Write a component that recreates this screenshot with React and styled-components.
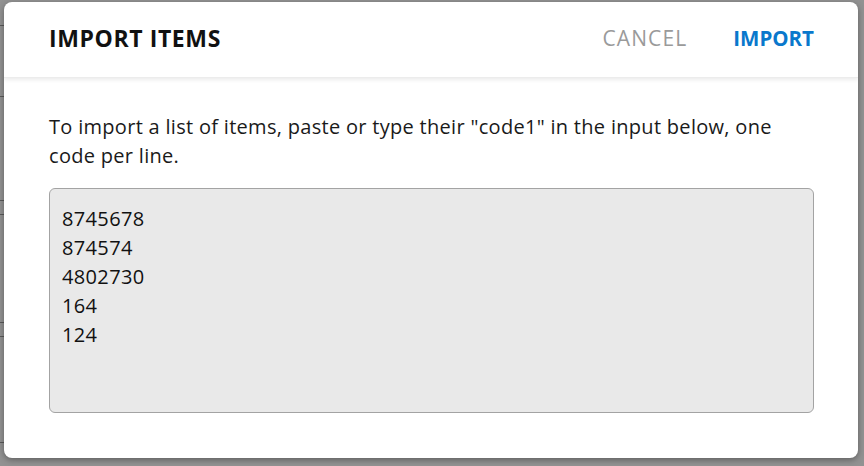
import React from "react";
import styled, { createGlobalStyle } from "styled-components";

const Global = createGlobalStyle`
  html, body { margin: 0; padding: 0; }
  body {
    width: 864px; height: 466px; overflow: hidden;
    background: #929292;
    font-family: "Open Sans", "Noto Sans", sans-serif;
  }
`;

const Backdrop = styled.div`
  position: relative;
  width: 864px;
  height: 466px;
  padding: 2px 6px 8px 4px;
  box-sizing: border-box;
  background: #929292;
`;

const BgLine = styled.div`
  position: absolute;
  left: 0;
  width: 4px;
  height: 1px;
  background: #5a5a5a;
`;

const Dialog = styled.div`
  position: relative;
  height: 456px;
  background: #fff;
  border-radius: 8px;
  box-shadow: 0 2px 6px rgba(0,0,0,0.35);
  display: flex;
  flex-direction: column;
  overflow: hidden;
`;

const Header = styled.div`
  height: 75px;
  flex: none;
  display: flex;
  align-items: center;
  justify-content: space-between;
  padding: 0 44px 0 45px;
  box-shadow: 0 2px 4px rgba(0,0,0,0.08);
  border-bottom: 1px solid #ececec;
  position: relative;
  z-index: 1;
`;

const Title = styled.h1`
  margin: -3px 0 0;
  font-size: 23px;
  font-weight: 700;
  letter-spacing: 0.6px;
  color: #111;
`;

const Actions = styled.div`
  display: flex;
  align-items: center;
  gap: 46px;
  margin-top: -3px;
`;

const ActionButton = styled.button`
  border: none;
  background: none;
  padding: 0;
  font-family: inherit;
  font-size: ${p => (p.$primary ? "20.5px" : "21px")};
  letter-spacing: ${p => (p.$primary ? "0" : "1.1px")};
  font-weight: ${p => (p.$primary ? 700 : 400)};
  color: ${p => (p.$primary ? "#0a78cc" : "#9a9a9a")};
  cursor: pointer;
`;

const Body = styled.div`
  flex: 1;
  padding: 34px 44px 45px 45px;
  display: flex;
  flex-direction: column;
`;

const Intro = styled.p`
  margin: 0 0 18px;
  max-width: 745px;
  font-size: 20px;
  letter-spacing: 0.3px;
  line-height: 29px;
  color: #1a1a1a;
`;

const CodeArea = styled.textarea`
  flex: 1;
  resize: none;
  background: #e9e9e9;
  border: 1px solid #a3a3a3;
  border-radius: 6px;
  padding: 15px 12px 12px;
  font-family: inherit;
  font-size: 20px;
  letter-spacing: 0.35px;
  line-height: 29px;
  color: #111;
  outline: none;
  caret-color: #111;
`;

export default function App() {
  const ref = React.useRef(null);
  React.useEffect(() => {
    const el = ref.current;
    if (el) {
      el.focus();
      el.setSelectionRange(el.value.length, el.value.length);
    }
  }, []);
  return (
    <>
      <Global />
      <Backdrop>
        <BgLine style={{ top: 25 }} />
        <BgLine style={{ top: 96 }} />
        <BgLine style={{ top: 200 }} />
        <BgLine style={{ top: 214 }} />
        <BgLine style={{ top: 322 }} />
        <BgLine style={{ top: 336 }} />
        <BgLine style={{ top: 442 }} />
        <Dialog>
          <Header>
            <Title>IMPORT ITEMS</Title>
            <Actions>
              <ActionButton>CANCEL</ActionButton>
              <ActionButton $primary>IMPORT</ActionButton>
            </Actions>
          </Header>
          <Body>
            <Intro>
              To import a list of items, paste or type their "code1" in the input below, one code per line.
            </Intro>
            <CodeArea
              ref={ref}
              autoFocus
              defaultValue={"8745678\n874574\n4802730\n164\n124"}
              spellCheck={false}
            />
          </Body>
        </Dialog>
      </Backdrop>
    </>
  );
}
